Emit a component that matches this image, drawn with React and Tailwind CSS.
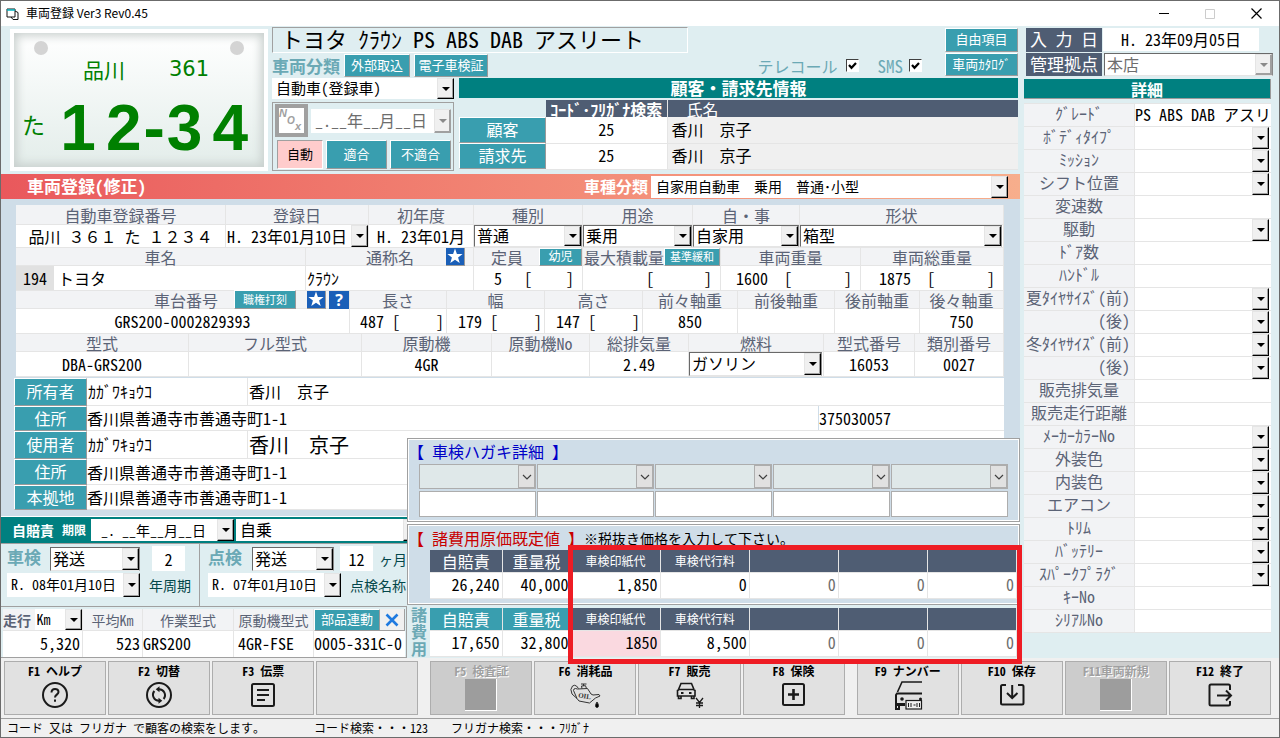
import React from "react";

const tealButton =
  "flex items-center justify-center whitespace-nowrap bg-[#399eaf] pb-[2px] text-white border-t border-l border-r border-b border-t-white border-l-white border-r-[#9a9a9a] border-b-[#9a9a9a]";

function Arrow({ muted = false }) {
  return (
    <span
      className={`pointer-events-none flex w-[17px] shrink-0 items-center justify-center border border-l-[#e5e5e5] border-t-[#e5e5e5] bg-[#f0f0f0] shadow-[inset_-1px_-1px_0_#a0a0a0] ${muted ? "border-b-[#a0a0a0] border-r-[#a0a0a0]" : "border-b-black border-r-black"}`}
    >
      <svg width="8" height="4" viewBox="0 0 8 4" aria-hidden="true">
        <path d="M0 0h8L4 4z" fill={muted ? "#8a8a8a" : "#000"} />
      </svg>
    </span>
  );
}

function Combo({ label, id, value = "", sunken = false, muted = false, className = "", textClass = "text-base" }) {
  return (
    <div
      className={`flex min-w-0 items-stretch bg-white ${sunken ? "border border-b-[#e5e5e5] border-l-[#696969] border-r-[#8a8a8a] border-t-[#696969]" : ""} ${className}`}
    >
      <select
        id={id}
        aria-label={label}
        defaultValue={value}
        disabled={muted}
        className={`min-w-0 flex-1 appearance-none bg-white px-[2px] pb-[2px] leading-[18px] outline-none disabled:opacity-100 ${muted ? "text-[#6d6d6d]" : "text-black"} ${textClass}`}
      >
        <option value={value}>{value}</option>
      </select>
      <Arrow muted={muted} />
    </div>
  );
}

function DateCombo({ label, value, className = "", textClass = "text-base", muted = false }) {
  return (
    <div className={`flex min-w-0 items-stretch bg-white ${className}`}>
      <input
        aria-label={label}
        defaultValue={value}
        className={`w-full min-w-0 flex-1 bg-white outline-none ${textClass}`}
      />
      <button type="button" aria-label={`${label} 選択`} className="flex items-stretch">
        <Arrow muted={muted} />
      </button>
    </div>
  );
}

function Text({ label, id, value = "", className = "" }) {
  return (
    <input
      id={id}
      aria-label={label}
      defaultValue={value}
      className={`h-full w-full min-w-0 bg-white outline-none ${className}`}
    />
  );
}

function Cell({ label, head = "h-[18px]", body = "h-[25px]", extra = null, extraClass = "justify-center", children }) {
  return (
    <div className="min-w-0 border-r border-[#e5e5e5]">
      <div className={`flex items-center whitespace-nowrap border-b border-[#e5e5e5] bg-[#f2f3f5] text-[#5b6376] ${extraClass} ${head}`}>
        <span>{label}</span>
        {extra}
      </div>
      <div className={`flex items-stretch border-b border-[#e5e5e5] bg-white ${body}`}>{children}</div>
    </div>
  );
}

function Bracket({ label, value = "", width, pad = "pr-2" }) {
  return (
    <div className={`flex w-full items-center justify-end ${pad}`}>
      <input aria-label={label} defaultValue={value} className="w-10 min-w-0 flex-1 bg-white text-right outline-none" />
      <label className={`flex shrink-0 justify-between ${width}`}>
        <span>[</span>
        <input aria-label={`${label} 補正`} className="w-4 min-w-0 flex-1 bg-white outline-none" />
        <span>]</span>
      </label>
    </div>
  );
}

function Star() {
  return (
    <button type="button" aria-label="お気に入り" className="flex h-[18px] w-[19px] items-center justify-center border-b border-r border-[#9a9a9a] bg-[#1a5fb8]">
      <svg width="16" height="16" viewBox="0 0 16 16" aria-hidden="true">
        <path d="M8 0.5L9.9 5.9L15.6 6L11.1 9.5L12.7 15L8 11.8L3.3 15L4.900 9.500L0.400 6L6.100 5.900Z" fill="#fff" />
      </svg>
    </button>
  );
}

function Party({ title, height, children }) {
  return (
    <div className={`flex ${height}`}>
      <button type="button" className={`w-[73px] shrink-0 text-base leading-4 ${tealButton}`}>{title}</button>
      <div className="flex min-w-0 flex-1 border-b border-[#e5e5e5] bg-white">{children}</div>
    </div>
  );
}

const details = [
  ["ｸﾞﾚｰﾄﾞ", "text"],
  ["ﾎﾞﾃﾞｨﾀｲﾌﾟ", "list"],
  ["ﾐｯｼｮﾝ", "list"],
  ["シフト位置", "list"],
  ["変速数", "text"],
  ["駆動", "list"],
  ["ﾄﾞｱ数", "text"],
  ["ﾊﾝﾄﾞﾙ", "text"],
  ["夏ﾀｲﾔｻｲｽﾞ(前)", "list"],
  ["(後)", "list"],
  ["冬ﾀｲﾔｻｲｽﾞ(前)", "list"],
  ["(後)", "list"],
  ["販売排気量", "text"],
  ["販売走行距離", "text"],
  ["ﾒｰｶｰｶﾗｰNo", "list"],
  ["外装色", "list"],
  ["内装色", "list"],
  ["エアコン", "list"],
  ["ﾄﾘﾑ", "list"],
  ["ﾊﾞｯﾃﾘｰ", "list"],
  ["ｽﾊﾟｰｸﾌﾟﾗｸﾞ", "list"],
  ["ｷｰNo", "text"],
  ["ｼﾘｱﾙNo", "text"],
];

function CostTable({ values, caption, teal = false, highlight = false, body }) {
  const heads = ["自賠責", "重量税", "車検印紙代", "車検代行料", "", "", ""];
  return (
    <table aria-label={caption} className="w-full table-fixed border-collapse">
      <colgroup>
        <col className="w-[72px]" />
        <col className="w-[69px]" />
        <col />
        <col />
        <col />
        <col />
        <col />
      </colgroup>
      <thead>
        <tr className="h-[22px]">
          {heads.map((h, i) => (
            <th
              key={i}
              scope="col"
              className={`border-b border-r border-[#e5e5e5] p-0 font-normal text-white ${i < 2 ? "text-base leading-5" : "text-xs leading-5"} ${teal && i < 2 ? "bg-[#399eaf]" : "bg-[#4f5d73]"}`}
            >
              {h}
            </th>
          ))}
        </tr>
      </thead>
      <tbody>
        <tr className={body}>
          {values.map((v, i) => (
            <td key={i} className={`border-b border-r border-[#e5e5e5] p-0 ${highlight && i === 2 ? "bg-[#fad9e0]" : "bg-white"}`}>
              <input
                aria-label={heads[i] || `費用${i + 1}`}
                defaultValue={v}
                className={`block h-6 w-full bg-transparent pb-[2px] pr-[2px] text-right outline-none ${i > 3 ? "text-[#6d6d6d]" : "text-black"}`}
              />
            </td>
          ))}
        </tr>
      </tbody>
    </table>
  );
}

const stroke = { fill: "none", stroke: "#1a1a1a", strokeWidth: 2 };

const icons = {
  help: (
    <svg width="28" height="28" viewBox="0 0 28 28" aria-hidden="true" {...stroke}>
      <circle cx="14" cy="14" r="12" />
      <path d="M10.500 11.500C10.500 6.800 17.500 6.800 17.500 11C17.500 13.500 14 13.800 14 16.500" />
      <path d="M14 18.500v2.300" />
    </svg>
  ),
  swap: (
    <svg width="28" height="28" viewBox="0 0 28 28" aria-hidden="true" {...stroke}>
      <circle cx="14" cy="14" r="12" />
      <path d="M13.500 8.200A6 6 0 0 1 18.600 18M14.500 19.800A6 6 0 0 1 9.400 10" />
      <path d="M14.500 5.200V11.200L10.700 8.200ZM13.500 16.800V22.800L17.300 19.800Z" fill="#1a1a1a" stroke="none" />
    </svg>
  ),
  slip: (
    <svg width="28" height="28" viewBox="0 0 28 28" aria-hidden="true" {...stroke}>
      <rect x="3" y="3" width="22" height="22" rx="1.500" />
      <path d="M8 9h12M8 14h12M8 19h8" />
    </svg>
  ),
  oil: (
    <svg width="32" height="28" viewBox="0 0 32 28" aria-hidden="true" fill="none" stroke="#333" strokeWidth="1">
      <path d="M8.500 8L18.500 7.500L22 13L24 14L30 13.500L31 15L26.500 17L20.500 22L10 20L8 17.500L3 13Q0.500 8 3.500 5Q5.500 3.500 7.500 5L9.500 7.500" />
      <path d="M8 17.500L4.500 9.500Q4.500 7.500 6.500 7.500L8.500 8M13 7.700L12.500 5L16.500 4.700L17.500 7.500M14.500 5V3M12 3h5.500" />
      <text x="9" y="16.500" fontSize="7" fontFamily="Liberation Serif" fill="#333" stroke="none" transform="rotate(8 9 16)">OIL</text>
      <path d="M28 21C26 24 26 26.500 28 26.500S30 24 28 21Z" fill="#000" />
    </svg>
  ),
  sale: (
    <svg width="28" height="28" viewBox="0 0 28 28" aria-hidden="true" fill="none" stroke="#1a1a1a" strokeWidth="1.600">
      <path d="M2.500 8.500L5 2.500H15.500L18 8.500M1.500 15V9.500L3 8.500H17.500L19 9.500V15ZM2.500 15v2.500h2.500V15M15.500 15v2.500h2.500V15" />
      <path d="M5 12h2.500M13 12h2.500" strokeWidth="2" />
      <path d="M20 17l3.500 4.500L27 17M23.500 21.500V27M20 22h7M20 24.500h7" strokeWidth="1.300" />
    </svg>
  ),
  plus: (
    <svg width="28" height="28" viewBox="0 0 28 28" aria-hidden="true" {...stroke}>
      <rect x="3" y="3" width="21" height="21" rx="1.500" />
      <path d="M13.500 8v11M8 13.500h11" strokeWidth="2.600" />
    </svg>
  ),
  number: (
    <svg width="30" height="30" viewBox="0 0 30 30" aria-hidden="true" fill="none" stroke="#1a1a1a" strokeWidth="2">
      <path d="M29 2H9L4.500 12" strokeWidth="1.600" />
      <path d="M29 13.500H4L3 15V29H6V25H12" />
      <path d="M2 24.500H12" strokeWidth="3" />
      <circle cx="9" cy="19" r="1.800" fill="#1a1a1a" stroke="none" />
      <circle cx="27.500" cy="19" r="1.500" fill="#1a1a1a" stroke="none" />
      <rect x="13" y="20.500" width="15.500" height="8.500" fill="#eee" strokeWidth="1.200" />
      <path d="M15.500 23v4M18 23v4M20.500 25h2M24 23v4M26.500 23v4" strokeWidth="1" />
    </svg>
  ),
  save: (
    <svg width="28" height="28" viewBox="0 0 28 28" aria-hidden="true" {...stroke}>
      <path d="M8 4H4.500Q3 4 3 5.500V22Q3 23.500 4.500 23.500H24Q25.500 23.500 25.500 22V5.500Q25.500 4 24 4H20" />
      <path d="M14.200 4V17M9 12L14.200 17L19.500 12" />
    </svg>
  ),
  exit: (
    <svg width="28" height="28" viewBox="0 0 28 28" aria-hidden="true" {...stroke}>
      <path d="M24 9V5Q24 3.500 22.500 3.500H5Q3.500 3.500 3.500 5V23Q3.500 24.500 5 24.500H22.500Q24 24.500 24 23V20" />
      <path d="M11 14.500H24.500M20 9.500L25 14.500L20 19.500" />
    </svg>
  ),
};

const keyGroups = [
  [["F1 ヘルプ", "help"], ["F2 切替", "swap"], ["F3 伝票", "slip"], ["", null]],
  [["F5 検査証", "off"], ["F6 消耗品", "oil"], ["F7 販売", "sale"], ["F8 保険", "plus"]],
  [["F9 ナンバー", "number"], ["F10 保存", "save"], ["F11車両新規", "off"], ["F12 終了", "exit"]],
];

function FunctionKey({ label, icon }) {
  const off = icon === "off";
  return (
    <button
      type="button"
      disabled={off}
      aria-label={label || "F4"}
      className={`flex h-[54px] min-w-0 flex-1 flex-col items-center border border-[#adadad] pt-px text-xs font-bold leading-4 ${off ? "bg-[#cccccc] text-[#a0a0a0] [text-shadow:1px_1px_0_#fff]" : "bg-[#e1e1e1] text-black"}`}
    >
      <span className="whitespace-nowrap">{label}</span>
      {off ? <span className="h-8 w-8 border-b border-r border-white bg-[#9d9d9d]" /> : icon && <span className="flex h-8 items-center">{icons[icon]}</span>}
    </button>
  );
}

function Plate() {
  return (
    <div className="my-[3px] ml-[9px] w-[258px] shrink-0 border-4 border-white bg-gradient-to-b from-white to-[#e3edea] px-4 pt-2 text-[#008000] shadow-[inset_0_0_10px_3px_#c9d0ce]">
      <div className="flex justify-between px-1">
        <span className="h-[14px] w-[14px] rounded-full bg-[#d4d4d4]" />
        <span className="h-[14px] w-[14px] rounded-full bg-[#d4d4d4]" />
      </div>
      <div className="flex h-7 items-center gap-[44px] pl-[53px] text-[21px]">
        <span>品川</span>
        <span className="font-['DejaVu_Sans'] font-normal">361</span>
      </div>
      <div className="mt-[11px] flex items-center justify-between">
        <span className="-ml-2 pb-2 text-[23px] font-medium">た</span>
        <div className="flex gap-[10px] font-['Liberation_Sans'] text-[64px] font-bold leading-[68px]">
          <span>1</span>
          <span className="flex gap-[2px]">
            <span>2</span>
            <span>-</span>
            <span>3</span>
          </span>
          <span>4</span>
        </div>
      </div>
    </div>
  );
}

function Customers() {
  return (
    <table className="w-full table-fixed border-collapse">
      <colgroup>
        <col className="w-[87px]" />
        <col className="w-[121px]" />
        <col />
      </colgroup>
      <thead>
        <tr className="h-[21px]">
          <th colSpan={3} className="border-b-2 border-[#dfeef1] bg-[#008080] p-0 text-[17px] font-bold leading-4 text-white">
            顧客・請求先情報
          </th>
        </tr>
        <tr className="h-[18px] text-white">
          <td />
          <th scope="col" className="whitespace-nowrap border-r border-[#e5e5e5] bg-[#4f5d73] p-0 text-base font-bold leading-4">
            ｺｰﾄﾞ･ﾌﾘｶﾞﾅ検索
          </th>
          <th scope="col" className="bg-[#4f5d73] py-0 pl-[19px] text-left text-base font-medium leading-4">氏名</th>
        </tr>
      </thead>
      <tbody>
        {["顧客", "請求先"].map((name) => (
          <tr key={name} className="h-[26px]">
            <td className="p-0">
              <button type="button" className={`h-[26px] w-full text-base ${tealButton}`}>{name}</button>
            </td>
            <td className="border-b border-r border-[#e5e5e5] bg-white p-0">
              <input aria-label={`${name}コード`} defaultValue="25" className="block h-6 w-full pb-[2px] text-center outline-none" />
            </td>
            <td className="border-b border-[#e5e5e5] bg-[#f0f0f0] pb-[2px] pl-1 pt-0">香川　京子</td>
          </tr>
        ))}
      </tbody>
    </table>
  );
}

function Header() {
  return (
    <div className="flex h-[148px]">
      <Plate />
      <div className="ml-1 min-w-0 flex-1 pt-px">
        <div className="flex">
          <div className="min-w-0 flex-1">
            <div className="flex h-[26px] w-[416px] items-center whitespace-nowrap border border-b-white border-l-[#a0a0a0] border-r-white border-t-[#a0a0a0] pb-1 pl-2 text-[22px]">
              トヨタ ｸﾗｳﾝ PS ABS DAB アスリート
            </div>
            <div className="flex h-[25px] items-center text-[#6ba9b5]">
              <span className="w-[72px] text-[17px] font-bold">車両分類</span>
              <button type="button" className={`h-[23px] w-[66px] text-[13px] ${tealButton}`}>外部取込</button>
              <button type="button" className={`ml-1 h-[23px] w-[74px] text-[13px] ${tealButton}`}>電子車検証</button>
              <div className="ml-auto mr-[23px] flex items-center gap-[19px] text-base">
                <label className="flex items-center gap-2">
                  テレコール
                  <Check />
                </label>
                <label className="flex items-center gap-[6px] text-[17px] font-medium">
                  SMS
                  <Check />
                </label>
              </div>
            </div>
          </div>
          <div className="mr-[2px] flex w-[73px] flex-col gap-px pt-px text-[13px]">
            <button type="button" className={`h-[24px] ${tealButton}`}>自由項目</button>
            <button type="button" className={`h-[23px] ${tealButton}`}>車両ｶﾀﾛｸﾞ</button>
          </div>
        </div>
        <div className="flex gap-[5px] pr-[2px]">
          <div className="w-[182px] shrink-0">
            <Combo label="車両分類" value="自動車(登録車)" className="h-[21px]" textClass="text-[15px] pl-1" />
            <div className="mt-[3px] h-[69px] border border-[#a0a0a0] pl-[2px] pr-[2px] pt-px">
              <div className="flex items-center gap-[3px]">
                <button type="button" aria-label="NOx" className="h-[33px] w-[33px] shrink-0 border-4 border-[#a0a0a0] bg-white">
                  <svg width="25" height="25" viewBox="0 0 25 25" aria-hidden="true" fill="#a0a0a0" fontFamily="Liberation Sans" fontStyle="italic" fontWeight="bold">
                    <text x="0" y="9" fontSize="11">N</text>
                    <text x="8" y="16" fontSize="10">O</text>
                    <text x="16" y="22" fontSize="11">x</text>
                  </svg>
                </button>
                <DateCombo label="NOx 期限" value="_.__年__月__日" muted className="h-6 flex-1" textClass="text-base text-[#6d6d6d] pl-1 pb-[2px]" />
              </div>
              <div className="mt-[3px] flex gap-[3px] text-[13px]">
                <button type="button" className="ml-[2px] h-[29px] w-[46px] border border-b-white border-l-[#a0a0a0] border-r-white border-t-[#a0a0a0] bg-[#ffcccc] pb-[2px]">自動</button>
                <button type="button" className={`h-[29px] w-[61px] ${tealButton}`}>適合</button>
                <button type="button" className={`h-[29px] w-[61px] ${tealButton}`}>不適合</button>
              </div>
            </div>
          </div>
          <div className="min-w-0 flex-1">
            <Customers />
          </div>
        </div>
      </div>
    </div>
  );
}

function Check() {
  return (
    <span className="relative flex">
      <input
        type="checkbox"
        defaultChecked
        className="peer h-[13px] w-[13px] appearance-none border border-b-white border-l-[#404040] border-r-white border-t-[#404040] bg-white"
      />
      <svg className="pointer-events-none absolute left-0 top-0 hidden peer-checked:block" width="13" height="13" viewBox="0 0 13 13" aria-hidden="true">
        <path d="M3 6l2.500 2.800L10 4" fill="none" stroke="#000" strokeWidth="2.200" />
      </svg>
    </span>
  );
}

function VehicleForm() {
  return (
    <div className="bg-[#cfdde8] pb-[6px] pl-[15px] pr-4 pt-[6px]">
      <div className="grid grid-cols-[210fr_143fr_105fr_109fr_110fr_107fr_204fr]">
        <Cell label="自動車登録番号" head="h-[20px]" body="h-[23px]">
          <Text label="自動車登録番号" value="品川 ３６１ た １２３４" className="text-center" />
        </Cell>
        <Cell label="登録日" head="h-[20px]" body="h-[23px]">
          <DateCombo label="登録日" value="H. 23年01月10日" className="w-full" textClass="pl-px" />
        </Cell>
        <Cell label="初年度" head="h-[20px]" body="h-[23px]">
          <Text label="初年度" value="H. 23年01月" className="text-center" />
        </Cell>
        <Cell label="種別" head="h-[20px]" body="h-[23px]">
          <Combo label="種別" value="普通" sunken className="flex-1" />
        </Cell>
        <Cell label="用途" head="h-[20px]" body="h-[23px]">
          <Combo label="用途" value="乗用" sunken className="flex-1" />
        </Cell>
        <Cell label="自・事" head="h-[20px]" body="h-[23px]">
          <Combo label="自・事" value="自家用" sunken className="flex-1" />
        </Cell>
        <Cell label="形状" head="h-[20px]" body="h-[23px]">
          <Combo label="形状" value="箱型" sunken className="mr-px flex-1" />
        </Cell>
      </div>
      <div className="grid grid-cols-[290fr_168fr_109fr_138fr_140fr_143fr]">
        <Cell label="車名">
          <input aria-label="車名コード" defaultValue="194" className="w-[38px] bg-[#e1e1e1] text-center outline-none" />
          <Text label="車名" value="トヨタ" className="flex-1 pl-1" />
        </Cell>
        <Cell label="通称名" extraClass="justify-end gap-8 pr-2" extra={<Star />}>
          <Text label="通称名" value="ｸﾗｳﾝ" className="pl-px" />
        </Cell>
        <Cell
          label="定員"
          extraClass="justify-end gap-4"
          extra={<button type="button" className={`h-[18px] w-[43px] text-xs leading-3 ${tealButton}`}>幼児</button>}
        >
          <Bracket label="定員" value="5" width="ml-[22px] w-[50px]" />
        </Cell>
        <Cell
          label="最大積載量"
          extraClass="justify-end"
          extra={<button type="button" className={`h-[18px] w-[56px] text-[11px] leading-3 ${tealButton}`}>基準緩和</button>}
        >
          <Bracket label="最大積載量" width="w-[66px]" />
        </Cell>
        <Cell label="車両重量">
          <Bracket label="車両重量" value="1600" width="ml-4 w-[68px]" />
        </Cell>
        <Cell label="車両総重量">
          <Bracket label="車両総重量" value="1875" width="ml-4 w-[68px]" />
        </Cell>
      </div>
      <div className="grid grid-cols-[334fr_97fr_98fr_98fr_95fr_97fr_85fr_84fr]">
        <Cell
          label="車台番号"
          extraClass="justify-end"
          extra={
            <span className="ml-4 flex items-center gap-[3px]">
              <button type="button" className={`mr-2 h-[19px] w-[62px] text-[11px] leading-3 ${tealButton}`}>職権打刻</button>
              <Star />
              <button type="button" className="h-[18px] w-5 bg-[#1a5fb8] font-['Open_Sans'] text-base font-bold leading-4 text-white">?</button>
            </span>
          }
        >
          <Text label="車台番号" value="GRS200-0002829393" className="text-center" />
        </Cell>
        <Cell label="長さ">
          <Bracket label="長さ" value="487" width="ml-2 w-[52px]" pad="pr-[2px]" />
        </Cell>
        <Cell label="幅">
          <Bracket label="幅" value="179" width="ml-2 w-[52px]" pad="pr-[2px]" />
        </Cell>
        <Cell label="高さ">
          <Bracket label="高さ" value="147" width="ml-2 w-[52px]" pad="pr-[2px]" />
        </Cell>
        <Cell label="前々軸重">
          <Text label="前々軸重" value="850" className="text-center" />
        </Cell>
        <Cell label="前後軸重">
          <Text label="前後軸重" />
        </Cell>
        <Cell label="後前軸重">
          <Text label="後前軸重" />
        </Cell>
        <Cell label="後々軸重">
          <Text label="後々軸重" value="750" className="text-center" />
        </Cell>
      </div>
      <div className="grid grid-cols-[173fr_173fr_130fr_98fr_99fr_135fr_91fr_89fr]">
        <Cell label="型式">
          <Text label="型式" value="DBA-GRS200" className="text-center" />
        </Cell>
        <Cell label="フル型式">
          <Text label="フル型式" />
        </Cell>
        <Cell label="原動機">
          <Text label="原動機" value="4GR" className="text-center" />
        </Cell>
        <Cell label="原動機No">
          <Text label="原動機No" />
        </Cell>
        <Cell label="総排気量">
          <Text label="総排気量" value="2.49" className="text-center" />
        </Cell>
        <Cell label="燃料">
          <Combo label="燃料" value="ガソリン" sunken className="mr-px flex-1" />
        </Cell>
        <Cell label="型式番号">
          <Text label="型式番号" value="16053" className="text-center" />
        </Cell>
        <Cell label="類別番号">
          <Text label="類別番号" value="0027" className="text-center" />
        </Cell>
      </div>
      <div className="-ml-[2px] pt-px">
        <Party title="所有者" height="h-[28px]">
          <Text label="所有者フリガナ" value="ｶｶﾞﾜｷｮｳｺ" className="max-w-[161px] border-r border-[#e5e5e5] pb-[2px] pl-px" />
          <Text label="所有者" value="香川　京子" className="flex-1 pb-[2px] pl-px" />
        </Party>
        <Party title="住所" height="h-[25px]">
          <Text label="所有者住所" value="香川県善通寺市善通寺町1-1" className="flex-1" />
          <Text label="所有者住所コード" value="375030057" className="max-w-[186px] border-l border-[#cfdde8]" />
        </Party>
        <Party title="使用者" height="h-[28px]">
          <Text label="使用者フリガナ" value="ｶｶﾞﾜｷｮｳｺ" className="max-w-[161px] border-r border-[#e5e5e5] pb-[2px] pl-px" />
          <Text label="使用者" value="香川　京子" className="flex-1 pl-px text-xl" />
        </Party>
        <Party title="住所" height="h-[26px]">
          <Text label="使用者住所" value="香川県善通寺市善通寺町1-1" />
        </Party>
        <Party title="本拠地" height="h-[25px]">
          <Text label="本拠地" value="香川県善通寺市善通寺町1-1" />
        </Party>
      </div>
    </div>
  );
}

function Inspection({ title, titleClass, comboClass, cycle, unit, date, note, className }) {
  return (
    <div className={`flex shrink-0 flex-col gap-[2px] pt-[2px] ${className}`}>
      <div className="flex h-[25px] items-center">
        <span className={`pb-1 text-[17px] font-bold text-[#6ba9b5] ${titleClass}`}>{title}</span>
        <Combo label={`${title} 発送`} value="発送" sunken className={`h-6 ${comboClass}`} />
        <input aria-label={`${title} 周期`} defaultValue={cycle} className="h-[25px] w-[33px] bg-white text-center outline-none" />
        <span className="ml-[6px] whitespace-nowrap text-sm text-[#04474a]">{unit}</span>
      </div>
      <div className="flex h-[24px] items-center gap-[9px] whitespace-nowrap text-sm text-[#04474a]">
        <DateCombo label={`${title} 日付`} value={date} className="h-6 w-[133px] text-black" textClass="text-sm pl-1 pb-[2px]" />
        {note}
      </div>
    </div>
  );
}

function Floating() {
  return (
    <div className="absolute bottom-[53px] left-[406px] right-0 bg-white">
      <section className="h-[84px] border border-[#a0a0a0] bg-[#cfdde8] pl-[11px] pr-[11px] outline-1 -outline-offset-2 outline-white">
        <h2 className="-ml-[11px] h-[25px] text-base leading-6 text-[#0000c8]">【 車検ハガキ詳細 】</h2>
        <div className="grid grid-cols-5 gap-x-px gap-y-[2px]">
          {[1, 2, 3, 4, 5].map((n) => (
            <div key={n} className="flex h-[25px] border border-[#adadad] bg-[#dfe8e9]">
              <select aria-label={`ハガキ区分${n}`} disabled className="min-w-0 flex-1 appearance-none bg-transparent" />
              <span className="pointer-events-none flex w-[17px] items-center justify-center border border-[#adadad] bg-[#e1e1e1]">
                <svg width="10" height="6" viewBox="0 0 10 6" aria-hidden="true">
                  <path d="M1 1l4 4l4-4" fill="none" stroke="#404040" strokeWidth="1.200" />
                </svg>
              </span>
            </div>
          ))}
          {[1, 2, 3, 4, 5].map((n) => (
            <input key={n} aria-label={`ハガキ内容${n}`} className="h-[26px] w-full min-w-0 border border-[#adadad] bg-white" />
          ))}
        </div>
      </section>
      <section className="mt-[2px] h-[81px] border border-[#a0a0a0] bg-[#cfdde8] pl-[22px] pr-[2px] outline-1 -outline-offset-2 outline-white">
        <div className="-ml-[22px] flex h-[25px] items-center whitespace-nowrap">
          <h2 className="text-base leading-6 text-[#c80000]">【 諸費用原価既定値 】</h2>
          <span className="text-sm">※税抜き価格を入力して下さい。</span>
        </div>
        <CostTable caption="諸費用原価既定値" body="h-[26px]" values={["26,240", "40,000", "1,850", "0", "0", "0", "0"]} />
      </section>
      <div className="pointer-events-none absolute -bottom-[59px] -right-[2px] left-[161px] h-[119px] border-[5px] border-[#ee1c24]" />
    </div>
  );
}

function Running() {
  const head = "flex h-[22px] items-center justify-center whitespace-nowrap border-b border-r border-[#e5e5e5] bg-[#f2f3f5]";
  return (
    <div className="flex h-[52px]">
      <div className="w-[406px] shrink-0 border-b border-r border-t border-[#a0a0a0] pl-[2px] pt-[2px]">
        <div className="grid grid-cols-[80px_60px_91px_80px_91px] text-sm text-[#5b6376]">
          <div className={head}>
            <span className="w-8 font-bold">走行</span>
            <Combo label="走行単位" value="Km" className="h-[21px] w-12" textClass="text-sm" />
          </div>
          <div className={head}>平均Km</div>
          <div className={head}>作業型式</div>
          <div className={head}>原動機型式</div>
          <div className="flex h-[22px]">
            <button type="button" className={`h-[22px] w-[66px] text-[13px] ${tealButton}`}>部品連動</button>
            <button type="button" aria-label="解除" className="flex w-[25px] items-center justify-center border-b border-r border-[#a0a0a0] bg-[#f0f0f0]">
              <svg width="14" height="14" viewBox="0 0 14 14" aria-hidden="true">
                <path d="M1.500 1.500l11 11M12.500 1.500l-11 11" stroke="#1f7ae0" strokeWidth="2.600" />
              </svg>
            </button>
          </div>
        </div>
        <div className="grid h-[25px] grid-cols-[80px_60px_91px_80px_91px] border-b border-[#e5e5e5]">
          <Text label="走行距離" value="5,320" className="border-r border-[#e5e5e5] pb-[2px] pr-[2px] text-right" />
          <Text label="平均Km" value="523" className="border-r border-[#e5e5e5] pb-[2px] pr-[2px] text-right" />
          <Text label="作業型式" value="GRS200" className="border-r border-[#e5e5e5] pb-[2px]" />
          <Text label="原動機型式" value="4GR-FSE" className="border-r border-[#e5e5e5] pb-[2px] pl-1" />
          <Text label="部品連動" value="0005-331C-0" className="pb-[2px]" />
        </div>
      </div>
      <div className="w-[23px] shrink-0 pl-1 text-base font-bold leading-[17px] text-[#6ba9b5]">諸費用</div>
      <div className="min-w-0 flex-1 pr-[3px] pt-[2px]">
        <CostTable caption="諸費用" teal highlight body="h-[26px]" values={["17,650", "32,800", "1850", "8,500", "0", "0", "0"]} />
      </div>
    </div>
  );
}

function Details() {
  const caption = "flex w-[76px] shrink-0 items-center justify-center bg-[#4f5d73] pb-[2px] text-[17px] font-medium text-white";
  return (
    <aside className="w-[259px] shrink-0 pl-1 pr-2 pt-[2px]">
      <div className="ml-[2px] flex h-[24px]">
        <label htmlFor="entry-date" className={caption}>入 力 日</label>
        <input id="entry-date" defaultValue="H. 23年09月05日" className="ml-px mr-3 h-[23px] min-w-0 flex-1 bg-white pb-[2px] text-center outline-none" />
      </div>
      <div className="-mr-[2px] ml-[2px] mt-px flex h-[23px]">
        <label htmlFor="branch" className={caption}>管理拠点</label>
        <Combo id="branch" value="本店" sunken muted className="ml-[2px] flex-1" />
      </div>
      <h2 className="mt-[3px] h-[20px] border-b border-r border-[#9a9a9a] bg-[#008080] text-center text-base font-bold leading-5 text-white">詳細</h2>
      <div className="mt-1 border-t border-[#e5e5e5]">
        {details.map(([name, kind], i) => (
          <div key={i} className="flex h-[23px]">
            <label
              htmlFor={`detail-${i}`}
              className={`flex w-[111px] shrink-0 items-center whitespace-nowrap border-b border-r border-[#e5e5e5] bg-[#f2f3f5] pb-[5px] text-[#5b6376] ${name.endsWith(")") ? "justify-end pr-1" : "justify-center"}`}
            >
              {name}
            </label>
            {kind === "list" ? (
              <Combo id={`detail-${i}`} className="flex-1 border-b border-[#e5e5e5] pr-[2px]" />
            ) : (
              <input id={`detail-${i}`} defaultValue={i === 0 ? "PS ABS DAB アスリート" : ""} className="min-w-0 flex-1 border-b border-[#e5e5e5] bg-white pb-[2px] outline-none" />
            )}
          </div>
        ))}
      </div>
    </aside>
  );
}

export default function App() {
  return (
    <div className="flex min-h-screen flex-col border border-[#6b6b6b] bg-[#f0f0f0] font-['Noto_Sans_Mono_CJK_JP','Noto_Sans_CJK_JP',sans-serif] text-base font-light leading-5 text-black">
      <header className="flex h-[25px] items-center bg-white pl-[5px] font-['Noto_Sans_CJK_JP',sans-serif] text-xs font-normal">
        <svg width="14" height="14" viewBox="0 0 14 14" aria-hidden="true" fill="none" stroke="#111">
          <path d="M1 2h8v8H1zM5 10l2 2.500h5V5.500L9 4" fill="#fff" />
          <path d="M1 3h8" stroke="#00b5c0" strokeWidth="1.500" />
        </svg>
        <h1 className="ml-[6px] pb-[2px]">車両登録 Ver3 Rev0.45</h1>
        <div className="ml-auto flex">
          <button type="button" aria-label="最小化" className="flex h-6 w-[46px] items-center justify-center">
            <svg width="10" height="10" viewBox="0 0 10 10" aria-hidden="true"><path d="M0 4.500h10" stroke="#000" /></svg>
          </button>
          <button type="button" aria-label="最大化" disabled className="flex h-6 w-[46px] items-center justify-center">
            <svg width="10" height="10" viewBox="0 0 10 10" aria-hidden="true"><path d="M.5 .5h9v9h-9z" fill="none" stroke="#ccc" /></svg>
          </button>
          <button type="button" aria-label="閉じる" className="flex h-6 w-[46px] items-center justify-center">
            <svg width="11" height="11" viewBox="0 0 11 11" aria-hidden="true"><path d="M.5 .5l10 10M10.500 .5l-10 10" stroke="#000" strokeWidth="1.200" /></svg>
          </button>
        </div>
      </header>

      <main className="flex bg-[#dfeef1]">
        <div className="relative min-w-0 flex-1">
          <Header />
          <div className="flex h-[25px] items-center bg-gradient-to-r from-[#e9585c] to-[#f7ae8c] pl-[26px] pr-3 text-base font-bold text-white">
            <span className="pb-[2px] text-[17px]">車両登録(修正)</span>
            <label htmlFor="kind" className="ml-auto pb-[2px]">車種分類</label>
            <Combo id="kind" value="自家用自動車　乗用　普通･小型" className="ml-[3px] h-[22px] w-[357px]" textClass="text-sm font-light pl-[5px]" />
          </div>
          <VehicleForm />
          <div className="flex h-[27px] items-center border-t border-white bg-[#008080] pl-[11px] font-bold text-white">
            <span className="w-[50px] text-sm">自賠責</span>
            <span className="w-[29px] text-xs">期限</span>
            <DateCombo label="自賠責 期限" value="_. __年__月__日" className="h-[22px] w-[143px] text-black" textClass="text-sm font-light pl-[10px]" />
            <Combo label="自賠責 保険会社" value="自乗" className="ml-[2px] h-[22px] w-[184px]" textClass="text-base font-light pl-1" />
          </div>
          <div className="flex h-[63px] border-t border-[#a0a0a0]">
            <Inspection title="車検" titleClass="w-[43px]" comboClass="mr-3 w-[90px]" cycle="2" date="R. 08年01月10日" note="年周期" className="w-[199px] border-r border-[#a0a0a0] pl-[6px]" />
            <Inspection title="点検" titleClass="w-[46px]" comboClass="mr-[6px] w-[86px]" cycle="12" unit="ヶ月" date="R. 07年01月10日" note="点検名称" className="w-[207px] pl-2" />
          </div>
          <Running />
          <Floating />
        </div>
        <Details />
      </main>

      <nav className="flex gap-3 pb-[3px] pl-[3px] pr-2 pt-[3px]">
        {keyGroups.map((group, g) => (
          <div key={g} className="flex min-w-0 flex-1 gap-[2px]">
            {group.map(([label, icon], i) => (
              <FunctionKey key={i} label={label} icon={icon} />
            ))}
          </div>
        ))}
      </nav>
      <footer className="flex h-[19px] items-center whitespace-nowrap border-t border-[#a0a0a0] pl-[6px] text-xs font-normal">
        <span className="w-[307px]">コード 又は フリガナ で顧客の検索をします。</span>
        <span className="w-[137px]">コード検索・・・123</span>
        <span>フリガナ検索・・・ﾌﾘｶﾞﾅ</span>
      </footer>
    </div>
  );
}
